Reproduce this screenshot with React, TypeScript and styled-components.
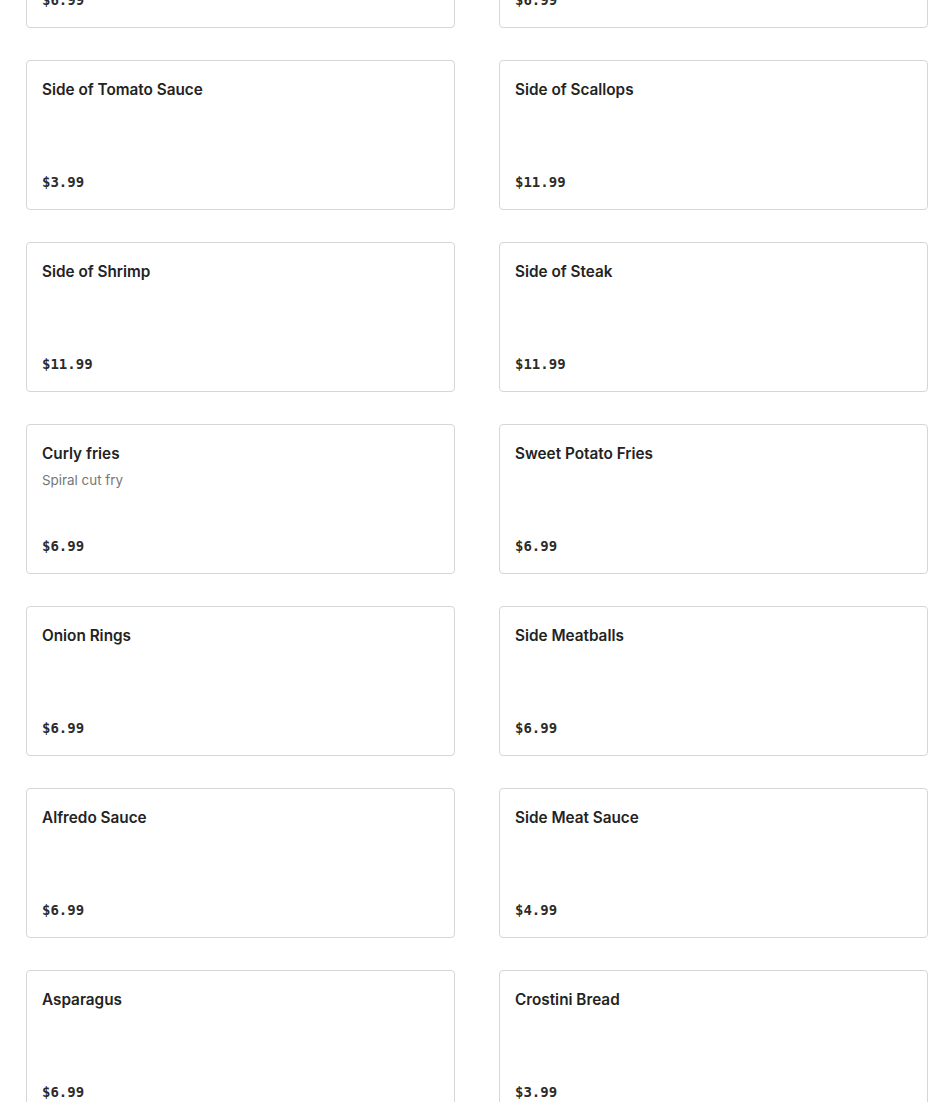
import React from "react";
import styled, { createGlobalStyle } from "styled-components";

const Global = createGlobalStyle`
  html, body { margin: 0; padding: 0; background: #ffffff; }
  body { font-family: Inter, "Noto Sans", sans-serif; color: #1f1f1f; }
`;

const Page = styled.div`
  padding: 0 22px 40px 26px;
  margin-top: -122px;
`;

const Grid = styled.div`
  display: grid;
  grid-template-columns: 429px 429px;
  column-gap: 44px;
  row-gap: 32px;
`;

const Card = styled.div`
  box-sizing: border-box;
  height: 150px;
  border: 1px solid #d6d6d6;
  border-radius: 4px;
  padding: 17px 16px 15px 15px;
  display: flex;
  flex-direction: column;
`;

const Title = styled.div`
  font-size: 15.3px;
  font-weight: 600;
  line-height: 24px;
  color: #232323;
`;

const Desc = styled.div`
  font-size: 13.4px;
  line-height: 18px;
  margin-top: 5px;
  color: #767676;
`;

const Price = styled.div`
  margin-top: auto;
  font-family: "DejaVu Sans Mono", "Liberation Mono", monospace;
  font-weight: 700;
  font-size: 14px;
  line-height: 24px;
  color: #2b2b2b;
`;

type Item = { name: string; price: string; desc?: string };

const items: Item[] = [
  { name: "Side Salad", price: "$6.99" },
  { name: "Side Vegetables", price: "$6.99" },
  { name: "Side of Tomato Sauce", price: "$3.99" },
  { name: "Side of Scallops", price: "$11.99" },
  { name: "Side of Shrimp", price: "$11.99" },
  { name: "Side of Steak", price: "$11.99" },
  { name: "Curly fries", price: "$6.99", desc: "Spiral cut fry" },
  { name: "Sweet Potato Fries", price: "$6.99" },
  { name: "Onion Rings", price: "$6.99" },
  { name: "Side Meatballs", price: "$6.99" },
  { name: "Alfredo Sauce", price: "$6.99" },
  { name: "Side Meat Sauce", price: "$4.99" },
  { name: "Asparagus", price: "$6.99" },
  { name: "Crostini Bread", price: "$3.99" },
];

export default function App() {
  return (
    <Page>
      <Global />
      <Grid>
        {items.map((it, i) => (
          <Card key={i}>
            <Title>{it.name}</Title>
            {it.desc && <Desc>{it.desc}</Desc>}
            <Price>{it.price}</Price>
          </Card>
        ))}
      </Grid>
    </Page>
  );
}
